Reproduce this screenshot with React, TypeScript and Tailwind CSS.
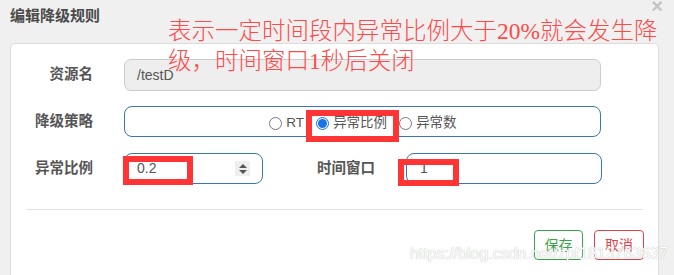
import React from 'react';

const sans = { fontFamily: '"Liberation Sans", "Noto Sans CJK SC", sans-serif' };

function Radio({ label, checked }: { label: string; checked?: boolean }) {
  return (
    <label className="flex items-center gap-[4px] text-[13.5px] text-[#555]">
      <span
        className={
          checked
            ? 'flex h-[13px] w-[13px] items-center justify-center rounded-full border border-[#1a73e8] bg-white'
            : 'flex h-[13px] w-[13px] items-center justify-center rounded-full border border-[#777] bg-white'
        }
      >
        {checked && <span className="h-[9px] w-[9px] rounded-full bg-[#1a73e8]" />}
      </span>
      <span>{label}</span>
    </label>
  );
}

function Spinner() {
  return (
    <div className="flex h-[15px] w-[15px] flex-col items-center justify-center gap-[2px] bg-[#eee]">
      <svg width="8" height="4" viewBox="0 0 8 4">
        <path d="M0 4 L4 0 L8 4 Z" fill="#555" />
      </svg>
      <svg width="8" height="4" viewBox="0 0 8 4">
        <path d="M0 0 L4 4 L8 0 Z" fill="#555" />
      </svg>
    </div>
  );
}

export default function App() {
  return (
    <div className="relative h-[275px] w-[674px] overflow-hidden bg-[#f0f0f0]" style={sans}>
      {/* header */}
      <div className="flex h-[43px] items-start justify-between pl-[10px] pr-[11px]">
        <h1 className="mt-[5px] text-[15px] font-bold text-[#4a4a4a]">编辑降级规则</h1>
        <span className="-mt-[9px] text-[20px] font-bold text-[#c4c4c4]">×</span>
      </div>

      {/* panel */}
      <div className="ml-[10px] mr-[15px] h-[240px] rounded-t-[5px] border border-[#dcdcdc] bg-white pt-[15px]">
        <div className="flex items-center">
          <div className="w-[82px] text-right text-[14.5px] font-bold text-[#555]">资源名</div>
          <div className="ml-[31px] flex h-[32px] w-[477px] items-center rounded-[7px] border border-[#ccc] bg-[#eee] pl-[12px] text-[14px] text-[#555]">
            /testD
          </div>
        </div>

        <div className="mt-[15px] flex items-center">
          <div className="w-[82px] text-right text-[14.5px] font-bold text-[#555]">降级策略</div>
          <div className="ml-[31px] flex h-[31px] w-[477px] items-center justify-center gap-[12px] rounded-[8px] border border-[#3a76b0] pl-[1px] pt-[4px]">
            <Radio label="RT" />
            <Radio label="异常比例" checked />
            <Radio label="异常数" />
          </div>
        </div>

        <div className="mt-[16px] flex items-center">
          <div className="w-[82px] text-right text-[14.5px] font-bold text-[#555]">异常比例</div>
          <div className="ml-[31px] flex h-[31px] w-[139px] items-center justify-between rounded-[8px] border border-[#3a76b0] pl-[12px] pr-[12px] text-[14px] text-[#555]">
            <span>0.2</span>
            <Spinner />
          </div>
          <div className="w-[112px] text-right text-[14.5px] font-bold text-[#555]">时间窗口</div>
          <div className="ml-[31px] flex h-[31px] w-[196px] items-center rounded-[8px] border border-[#3a76b0] pl-[13px] text-[14px] text-[#555]">
            1
          </div>
        </div>

        <div className="ml-[15px] mt-[25px] h-px w-[617px] bg-[#e2e2e2]" />

        <div className="mt-[20px] flex justify-end gap-[11px] pr-[14px]">
          <button className="h-[30px] w-[49px] rounded-[4px] border border-[#3aa54a] bg-white text-[14px] text-[#3aa54a]">
            保存
          </button>
          <button className="h-[30px] w-[50px] rounded-[4px] border border-[#e0414b] bg-white text-[14px] text-[#e0414b]">
            取消
          </button>
        </div>
      </div>

      {/* annotation overlay */}
      <div
        className="absolute left-[168px] top-[16px] w-[500px] text-[23.5px] font-light leading-[30px] text-[#ff4a4a]"
        style={{ fontFamily: '"Liberation Serif", "Noto Sans CJK SC", serif' }}
      >
        <div>表示一定时间段内异常比例大于20%就会发生降</div>
        <div>级，时间窗口1秒后关闭</div>
      </div>
      <div className="absolute left-[306px] top-[110px] h-[32px] w-[93px] border-[6px] border-[#ff3535]" />
      <div className="absolute left-[123px] top-[156px] h-[29px] w-[70px] border-[6px] border-[#ff3535]" />
      <div className="absolute left-[398px] top-[159px] h-[27px] w-[61px] border-[6px] border-[#ff3535]" />

      {/* watermark */}
      <div
        className="absolute left-[410px] top-[244px] text-[16px] leading-[20px] text-white"
        style={{ textShadow: '0 0 1px rgba(120,120,120,0.7)' }}
      >
        https://blog.csdn.net/zpf1813763637
      </div>
    </div>
  );
}
